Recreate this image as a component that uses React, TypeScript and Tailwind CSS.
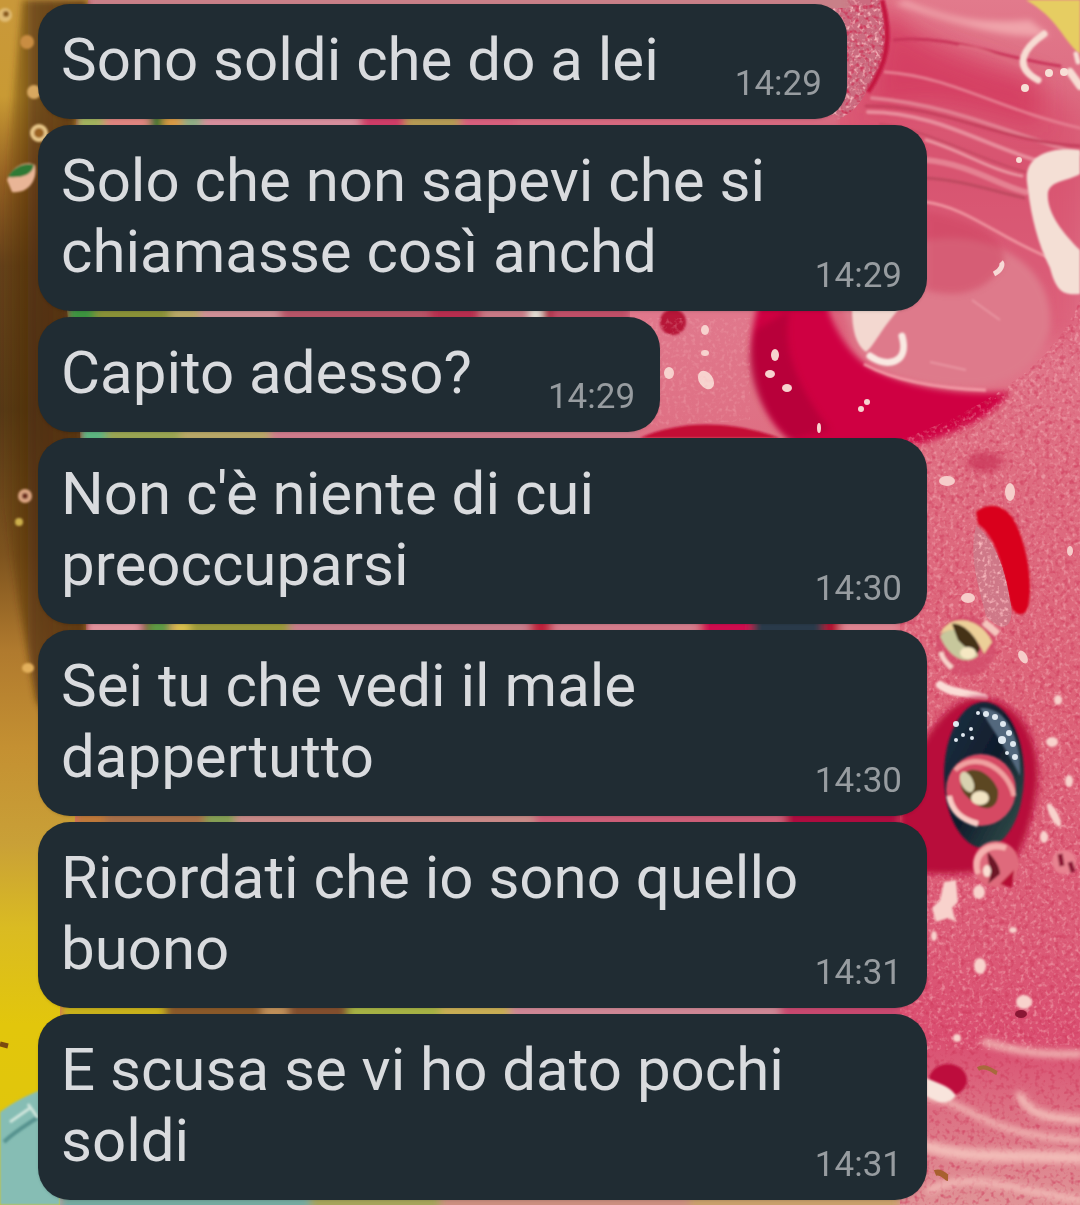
const messages = [
  { id: 1, text: "Sono soldi che do a lei", time: "14:29" },
  { id: 2, text: "Solo che non sapevi che si chiamasse così anchd", time: "14:29" },
  { id: 3, text: "Capito adesso?", time: "14:29" },
  { id: 4, text: "Non c'è niente di cui preoccuparsi", time: "14:30" },
  { id: 5, text: "Sei tu che vedi il male dappertutto", time: "14:30" },
  { id: 6, text: "Ricordati che io sono quello buono", time: "14:31" },
  { id: 7, text: "E scusa se vi ho dato pochi soldi", time: "14:31" },
];

// colour bands of the candy behind the messages: [y, [[x, width, fill], ...]]
const bands: [number, [number, number, string][]][] = [
  [-6, [[88, 762, "#c98088"]]],
  [
    115,
    [
      [76, 28, "#a2b35e"],
      [104, 46, "#df8580"],
      [150, 13, "#17752d"],
      [163, 19, "#d99a45"],
      [182, 20, "#8fae86"],
      [202, 158, "#d78f9d"],
      [360, 45, "#cf3d68"],
      [405, 55, "#b59b55"],
      [460, 55, "#d8607e"],
      [515, 325, "#d76a80"],
    ],
  ],
  [
    307,
    [
      [67, 28, "#3d9440"],
      [95, 75, "#8a9238"],
      [170, 30, "#b9a868"],
      [200, 80, "#cf9097"],
      [280, 150, "#b75467"],
      [430, 50, "#b82e50"],
      [480, 50, "#c87a86"],
      [530, 12, "#e6e9df"],
      [542, 10, "#a81838"],
      [552, 78, "#c05068"],
    ],
  ],
  [
    428,
    [
      [80, 26, "#5db581"],
      [106, 74, "#9aa552"],
      [180, 90, "#b9a868"],
      [270, 370, "#cf7c8c"],
    ],
  ],
  [
    620,
    [
      [86, 56, "#e2939c"],
      [142, 6, "#7a3a20"],
      [148, 22, "#5f9b45"],
      [172, 18, "#d9c04e"],
      [190, 100, "#9b9a3a"],
      [290, 240, "#c97e8c"],
      [530, 22, "#c0203c"],
      [552, 148, "#d57d8c"],
      [700, 52, "#d00a50"],
      [752, 72, "#2c3b4c"],
      [824, 16, "#b51030"],
      [840, 60, "#df8592"],
    ],
  ],
  [
    812,
    [
      [75, 30, "#c07a3a"],
      [105, 100, "#a8704a"],
      [205, 30, "#85a055"],
      [235, 300, "#c98a88"],
      [535, 250, "#cd5f78"],
      [785, 115, "#b01040"],
    ],
  ],
  [
    1004,
    [
      [60, 105, "#c9b21a"],
      [165, 97, "#8b5a2c"],
      [262, 26, "#c0905a"],
      [288, 60, "#83502e"],
      [348, 92, "#a6b344"],
      [440, 70, "#c9ae55"],
      [510, 270, "#cf8896"],
      [780, 120, "#c94870"],
    ],
  ],
  [
    1196,
    [
      [60, 250, "#76aaa0"],
      [310, 130, "#a6a45c"],
      [440, 250, "#cc8f80"],
      [690, 210, "#c9a06c"],
    ],
  ],
];

const Wallpaper = () => (
  <svg
    className="absolute inset-0 h-full w-full"
    viewBox="0 0 1080 1205"
    preserveAspectRatio="xMidYMin slice"
    aria-hidden="true"
  >
    <defs>
      <linearGradient id="gold" x1="0" y1="0" x2="0" y2="1">
        <stop offset="0" stopColor="#c9983a" />
        <stop offset="0.08" stopColor="#c99a34" />
        <stop offset="0.15" stopColor="#946022" />
        <stop offset="0.22" stopColor="#65421a" />
        <stop offset="0.34" stopColor="#573a16" />
        <stop offset="0.46" stopColor="#7d531e" />
        <stop offset="0.54" stopColor="#b07a2e" />
        <stop offset="0.62" stopColor="#c49032" />
        <stop offset="0.7" stopColor="#c9a037" />
        <stop offset="0.77" stopColor="#dabb22" />
        <stop offset="0.85" stopColor="#e2c60c" />
        <stop offset="1" stopColor="#dfc60c" />
      </linearGradient>
      <linearGradient id="brown" x1="0" y1="0" x2="1" y2="0">
        <stop offset="0" stopColor="#4d2c0c" stopOpacity="0" />
        <stop offset="0.4" stopColor="#4d2c0c" stopOpacity="0.7" />
        <stop offset="1" stopColor="#5a340e" stopOpacity="0.9" />
      </linearGradient>
      <linearGradient id="pink" x1="0" y1="0" x2="0" y2="1">
        <stop offset="0" stopColor="#e27a8c" />
        <stop offset="0.14" stopColor="#d9627a" />
        <stop offset="0.26" stopColor="#e0788c" />
        <stop offset="0.4" stopColor="#de6c80" />
        <stop offset="0.6" stopColor="#dd6278" />
        <stop offset="0.78" stopColor="#dc5c78" />
        <stop offset="0.86" stopColor="#da4d70" />
        <stop offset="0.92" stopColor="#dc7083" />
        <stop offset="1" stopColor="#e09497" />
      </linearGradient>
      <linearGradient id="seed" x1="0" y1="0" x2="1" y2="1">
        <stop offset="0" stopColor="#1f3445" />
        <stop offset="0.5" stopColor="#0f1b2b" />
        <stop offset="1" stopColor="#37564f" />
      </linearGradient>
      <filter id="blur2" x="-30%" y="-30%" width="160%" height="160%">
        <feGaussianBlur stdDeviation="1" />
      </filter>
      <filter id="blur6" x="-30%" y="-30%" width="160%" height="160%">
        <feGaussianBlur stdDeviation="3" />
      </filter>
      <filter id="blur14" x="-40%" y="-40%" width="180%" height="180%">
        <feGaussianBlur stdDeviation="12" />
      </filter>
      <filter id="blend" x="0" y="0" width="100%" height="100%">
        <feGaussianBlur stdDeviation="4 0" />
      </filter>
      <filter id="sugar" x="0" y="0" width="100%" height="100%" colorInterpolationFilters="sRGB">
        <feTurbulence type="fractalNoise" baseFrequency="0.24" numOctaves="2" seed="4" />
        <feColorMatrix values="0 0 0 0 0.97  0 0 0 0 0.72  0 0 0 0 0.74  3.2 0 0 0 -1.6" />
        <feComposite in2="SourceGraphic" operator="in" />
      </filter>
      <filter id="grit" x="0" y="0" width="100%" height="100%" colorInterpolationFilters="sRGB">
        <feTurbulence type="fractalNoise" baseFrequency="0.2" numOctaves="2" seed="11" />
        <feColorMatrix values="0 0 0 0 0.8  0 0 0 0 0.2  0 0 0 0 0.34  0 3.2 0 0 -1.6" />
        <feComposite in2="SourceGraphic" operator="in" />
      </filter>
    </defs>

    <rect width="1080" height="1205" fill="url(#pink)" />

    {/* pulled sugar, top right */}
    <path d="M870 0C900 30 1000 60 1080 110V340H830V0z" fill="#d84767" opacity="0.5" filter="url(#blur14)" />
    <path d="M885 0C900 40 960 60 1040 80V125C1000 120 930 85 870 115z" fill="#d12a54" opacity="0.55" filter="url(#blur14)" />
    <path d="M905 0C940 14 970 25 1030 20L1050 36C1000 40 940 18 895 4z" fill="#f0a4ab" filter="url(#blur6)" />
    <g fill="none" strokeLinecap="round" filter="url(#blur2)">
      <path d="M885 72C950 76 1000 110 1080 128" stroke="#e57a8e" strokeWidth="3" />
      <path d="M872 98C950 105 1000 130 1080 154" stroke="#e27e90" strokeWidth="4" />
      <path d="M868 112C940 112 990 150 1050 164" stroke="#e88c9b" strokeWidth="4" />
      <path d="M866 106C940 104 1000 142 1080 146" stroke="#c5405d" strokeWidth="3" />
      <path d="M880 124C930 130 980 160 1026 172" stroke="#c54862" strokeWidth="2" />
      <path d="M926 140C960 150 990 170 1022 176" stroke="#ea94a0" strokeWidth="3" />
      <path d="M926 178C960 180 990 190 1024 198" stroke="#bf4a60" strokeWidth="3" />
      <path d="M926 160C970 164 1000 186 1026 192" stroke="#e58192" strokeWidth="6" />
      <path d="M894 40C950 34 1000 58 1060 66" stroke="#c9355a" strokeWidth="3" />
      <path d="M926 202C970 208 1000 240 1060 262" stroke="#ee919d" strokeWidth="3" />
      <path d="M1050 70C1020 74 1000 50 960 46" stroke="#de6a7f" strokeWidth="3" />
    </g>
    <path d="M820 0H880C890 40 885 70 866 92C856 112 840 122 820 124z" fill="#cb6c80" />
    <path d="M820 0H880C890 40 885 70 866 92C856 112 840 122 820 124z" fill="#fff" filter="url(#sugar)" />
    <path d="M820 0H880C890 40 885 70 866 92C856 112 840 122 820 124z" fill="#fff" filter="url(#grit)" />
    <path d="M882 0C893 40 886 64 868 92" stroke="#c3133f" strokeWidth="5" fill="none" filter="url(#blur2)" />
    <path d="M1026 0H1080V54C1064 42 1058 18 1026 0z" fill="#e6cd62" filter="url(#blur2)" />
    <g fill="none" stroke="#f7dcd3" strokeLinecap="round" filter="url(#blur2)">
      <path d="M1044 34C1024 48 1012 66 1038 80" strokeWidth="7" />
      <path d="M1070 72L1080 86" strokeWidth="8" />
      <path d="M1076 54L1078 62" strokeWidth="5" />
    </g>
    <g fill="#f7dfd6">
      <circle cx="1025" cy="88" r="4" />
      <circle cx="1049" cy="73" r="4" />
      <circle cx="1064" cy="72" r="4" />
      <circle cx="1019" cy="160" r="3" />
    </g>
    <path
      d="M1080 150C1046 146 1024 158 1027 182C1030 210 1036 240 1050 268C1056 290 1062 296 1080 294V250C1062 232 1046 212 1048 192C1052 180 1066 182 1080 174z"
      fill="#f4dfd5"
      filter="url(#blur2)"
    />

    {/* glossy bubble */}
    <path d="M760 300C740 350 760 430 800 444H920C960 430 990 420 1010 392C950 396 900 384 868 366C845 350 830 320 826 300z" fill="#cf0642" filter="url(#blur6)" />
    <path d="M756 330C740 370 760 410 790 440L830 430C800 390 780 350 790 310z" fill="#a90334" opacity="0.6" filter="url(#blur6)" />
    <path d="M840 300C900 200 1060 230 1050 330C1030 390 970 396 900 376C860 364 850 340 840 300z" fill="#de7a8b" filter="url(#blur6)" />
    <path d="M926 212C980 220 1006 240 1004 262C990 290 960 300 926 290z" fill="#cf4260" opacity="0.5" filter="url(#blur6)" />
    <path d="M852 308H900C880 330 875 345 866 352C856 345 852 330 852 308z" fill="#f3d8d0" filter="url(#blur2)" />
    <path d="M902 336C910 364 886 368 870 356" stroke="#f9e9e2" strokeWidth="7" fill="none" strokeLinecap="round" filter="url(#blur2)" />
    <path d="M864 364C890 378 930 388 986 390" stroke="#f29aa5" strokeWidth="3" fill="none" filter="url(#blur2)" />
    <path d="M994 274C1002 270 1003 264 1001 262" stroke="#f7d9d6" strokeWidth="5" fill="none" />
    <path d="M972 300L1000 320M930 362L966 370" stroke="#e895a1" strokeWidth="2" fill="none" filter="url(#blur2)" />
    <circle cx="673" cy="322" r="13" fill="#b71537" filter="url(#blur2)" />
    <path d="M640 438C680 420 730 420 780 438z" fill="#c40a35" filter="url(#blur2)" />
    <g fill="#f7d3cf">
      <ellipse cx="775" cy="355" rx="4" ry="6" />
      <ellipse cx="770" cy="374" rx="5" ry="4" />
      <ellipse cx="787" cy="388" rx="5" ry="4" />
      <ellipse cx="705" cy="330" rx="4" ry="5" />
      <ellipse cx="705" cy="353" rx="4" ry="3" />
      <ellipse cx="669" cy="373" rx="5" ry="6" />
      <ellipse cx="706" cy="380" rx="7" ry="10" transform="rotate(-35 706 380)" />
      <circle cx="867" cy="402" r="3" />
      <circle cx="861" cy="409" r="3" />
      <ellipse cx="819" cy="428" rx="2" ry="5" />
    </g>

    {/* sugared surface */}
    <path d="M1080 300C1060 350 1010 400 900 440V1050H1080z" fill="#fff" opacity="0.5" filter="url(#sugar)" />
    <path d="M1080 300C1060 350 1010 400 900 440V1205H1080z" fill="#fff" opacity="0.55" filter="url(#grit)" />
    <path d="M640 318H750V420C720 424 690 420 640 430z" fill="#fff" opacity="0.3" filter="url(#sugar)" />
    <ellipse cx="985" cy="462" rx="18" ry="10" fill="#c93357" opacity="0.7" filter="url(#blur6)" />
    <path d="M976 512C990 500 1008 506 1016 524C1028 548 1034 590 1027 610C1022 618 1014 614 1011 606C1004 580 1000 540 978 524z" fill="#d9021f" filter="url(#blur2)" />
    <path d="M976 526C990 536 1004 560 1010 600C1016 626 1004 636 986 616C980 590 968 560 976 526z" fill="#cf7888" />
    <path d="M976 526C990 536 1004 560 1010 600C1016 626 1004 636 986 616C980 590 968 560 976 526z" fill="#fff" filter="url(#sugar)" />
    <g fill="#f6cdca">
      <ellipse cx="947" cy="481" rx="8" ry="5" />
      <ellipse cx="1070" cy="551" rx="3" ry="5" />
      <ellipse cx="1010" cy="492" rx="5" ry="9" />
      <ellipse cx="968" cy="598" rx="7" ry="5" />
      <ellipse cx="1023" cy="657" rx="4" ry="7" transform="rotate(-30 1023 657)" />
    </g>
    <g filter="url(#blur2)">
      <ellipse cx="966" cy="646" rx="30" ry="30" fill="#d2486a" opacity="0.7" />
      <path d="M940 634C950 612 982 618 992 642L984 654C976 634 960 624 940 634z" fill="#eccf98" />
      <path d="M940 636C950 624 972 630 978 656C962 668 946 652 940 636z" fill="#c7c79c" />
      <path d="M952 624C960 622 974 632 980 648C978 660 966 648 958 640z" fill="#443019" />
      <ellipse cx="968" cy="653" rx="8" ry="6" fill="#f5e7c2" />
      <path d="M941 652C942 660 948 664 952 668" stroke="#f8d3cb" strokeWidth="5" fill="none" />
      <path d="M984 622L998 634" stroke="#f5c6be" strokeWidth="7" />
      <path d="M940 685C952 694 968 692 984 698" stroke="#fbdcd6" strokeWidth="8" fill="none" strokeLinecap="round" />
    </g>

    {/* dark seed and its shadow */}
    <path d="M900 780C926 740 940 706 972 698C1010 692 1040 730 1038 780C1034 820 1024 844 1012 866C970 876 930 876 900 870z" fill="#b8093a" filter="url(#blur6)" />
    <ellipse cx="984" cy="775" rx="40" ry="73" fill="url(#seed)" filter="url(#blur2)" />
    <path d="M980 708C1006 706 1022 738 1020 776C1012 760 1000 740 988 722z" fill="#53687d" filter="url(#blur2)" />
    <g fill="#dfe8f0">
      <circle cx="986" cy="714" r="3" />
      <circle cx="995" cy="717" r="3" />
      <circle cx="1003" cy="724" r="3" />
      <circle cx="1009" cy="733" r="3" />
      <circle cx="1013" cy="744" r="3" />
      <circle cx="1002" cy="740" r="4" />
      <circle cx="1015" cy="757" r="3" />
      <circle cx="1007" cy="753" r="2" />
      <circle cx="978" cy="713" r="2" />
      <circle cx="956" cy="724" r="3" />
      <circle cx="971" cy="729" r="2" />
      <circle cx="963" cy="735" r="2" />
      <circle cx="956" cy="740" r="2" />
      <circle cx="972" cy="738" r="2" />
    </g>
    <g filter="url(#blur2)">
      <ellipse cx="981" cy="790" rx="35" ry="36" fill="#d64863" />
      <path d="M955 770C976 750 1008 768 1014 796" stroke="#f0a0a0" strokeWidth="5" fill="none" />
      <path d="M949 796C952 812 962 820 978 824" stroke="#f9cbc4" strokeWidth="6" fill="none" />
      <path d="M962 776C972 762 992 774 998 790C1000 808 986 814 974 802C964 796 958 788 962 776z" fill="#5c4724" />
      <ellipse cx="967" cy="782" rx="6" ry="11" transform="rotate(-25 967 782)" fill="#d8d2b0" />
      <ellipse cx="980" cy="798" rx="9" ry="7" fill="#f1e3c3" />
      <circle cx="996" cy="864" r="23" fill="#df6b7b" />
      <path d="M978 874C972 856 986 842 1006 848" stroke="#f5b0ae" strokeWidth="6" fill="none" />
      <path d="M988 852C996 860 1000 868 1000 874L988 884C994 870 986 862 988 852z" fill="#6d1225" />
      <path d="M1000 884L1014 870L1012 888z" fill="#b50a35" />
      <ellipse cx="987" cy="871" rx="4" ry="6" fill="#fbded3" />
      <circle cx="1064" cy="862" r="12" fill="#e88290" />
      <path d="M1060 854L1062 866M1070 862L1073 872" stroke="#8a1734" strokeWidth="5" />
    </g>
    <g fill="#f8d2cc" filter="url(#blur2)">
      <path d="M944 882L956 880L958 902L952 908L956 922L948 918L936 922L932 908L940 900z" />
      <ellipse cx="979" cy="892" rx="6" ry="7" />
      <ellipse cx="1054" cy="815" rx="4" ry="13" transform="rotate(-28 1054 815)" />
      <ellipse cx="1052" cy="742" rx="6" ry="5" />
      <ellipse cx="1058" cy="700" rx="4" ry="5" />
      <ellipse cx="1069" cy="781" rx="4" ry="6" />
      <ellipse cx="1044" cy="837" rx="4" ry="6" />
      <ellipse cx="980" cy="966" rx="6" ry="8" />
      <ellipse cx="934" cy="936" rx="3" ry="5" />
      <ellipse cx="1013" cy="930" rx="4" ry="3" />
      <ellipse cx="1024" cy="1002" rx="8" ry="7" />
      <circle cx="957" cy="1038" r="4" />
    </g>
    <ellipse cx="1021" cy="1014" rx="6" ry="4" fill="#8a1734" />

    {/* cream ripples, bottom right */}
    <g fill="none" stroke="#f2bcb8" strokeLinecap="round" filter="url(#blur6)">
      <path d="M985 1042C1010 1050 1040 1056 1080 1054" strokeWidth="7" />
      <path d="M1020 1096C1030 1116 1050 1118 1080 1120" strokeWidth="9" />
      <path d="M926 1098C970 1100 980 1136 1080 1140" strokeWidth="6" />
      <path d="M926 1146C970 1160 1010 1154 1080 1158" strokeWidth="12" />
      <path d="M930 1190C970 1170 1010 1190 1080 1200" strokeWidth="7" />
    </g>
    <ellipse cx="948" cy="1080" rx="19" ry="16" fill="#bd0f3d" filter="url(#blur2)" />
    <path d="M926 1078C940 1084 950 1086 956 1096C946 1108 934 1100 926 1096z" fill="#f8e4dc" filter="url(#blur2)" />
    <path d="M978 1069C986 1064 994 1072 997 1073" stroke="#a8693c" strokeWidth="4" fill="none" />
    <path d="M935 1173C942 1170 946 1178 948 1178" stroke="#a8602f" strokeWidth="6" fill="none" />

    {bands.map(([y, parts]) => (
      <g key={y} filter="url(#blend)">
        {parts.map(([x, width, fill]) => (
          <rect key={x} x={x} y={y} width={width} height="14" fill={fill} />
        ))}
      </g>
    ))}

    {/* golden edge, left */}
    <path d="M0 0H88L76 120L67 310L80 430L86 630L75 820L60 1010V1205H0z" fill="url(#gold)" />
    <path d="M22 0H88L76 120L67 310L80 430L86 630L75 760L36 700L18 600L0 480V240z" fill="url(#brown)" filter="url(#blur6)" />
    <path d="M0 1112C14 1102 24 1096 60 1082V1205H0z" fill="#86bdb4" filter="url(#blur2)" />
    <path d="M4 1142C14 1132 28 1124 40 1116" stroke="#56938f" strokeWidth="4" fill="none" filter="url(#blur2)" />
    <path d="M28 1104L38 1118M10 1122L30 1108" stroke="#cfe5dc" strokeWidth="3" fill="none" filter="url(#blur2)" />
    <path d="M0 1044L8 1046" stroke="#7a4a10" strokeWidth="5" />
    <g filter="url(#blur2)">
      <circle cx="5" cy="15" r="7" fill="#e0bb72" />
      <circle cx="6" cy="14" r="3" fill="#8a5c1e" />
      <circle cx="27" cy="42" r="7" fill="#c98d42" />
      <circle cx="34" cy="92" r="7" fill="#d8a860" />
      <circle cx="39" cy="133" r="7" fill="#9b6420" stroke="#e8c789" strokeWidth="4" />
      <path d="M7 180C12 166 26 160 35 165C38 180 28 194 12 192z" fill="#e9b596" />
      <path d="M8 177C14 166 26 162 34 165C32 176 20 178 8 177z" fill="#2f7a35" />
      <circle cx="25" cy="496" r="5" fill="#6b2f1c" stroke="#dba482" strokeWidth="4" />
      <circle cx="19" cy="522" r="4" fill="#cdb04c" />
      <ellipse cx="28" cy="668" rx="6" ry="5" fill="#e3b05c" />
    </g>
  </svg>
);

const Message = (props: { text: string; time: string }) => {
  return (
    <li className="flow-root max-w-[889px] rounded-[32px] bg-[#202c33] pb-[15px] pl-[23px] pr-[25px] pt-5 shadow-sm">
      <span className="text-[60px] leading-[71px] text-[#d9dbde]">{props.text}</span>
      <time className="float-right ml-[76px] mt-10 text-[35px] leading-10 text-[#979ca0]">
        {props.time}
      </time>
    </li>
  );
};

export default function App() {
  return (
    <main className="relative min-h-screen overflow-hidden bg-[#dd6278] font-[Roboto,sans-serif]">
      <Wallpaper />
      <ul className="relative flex flex-col items-start gap-1.5 pb-1 pl-[38px] pr-4 pt-1">
        {messages.map(({ id, text, time }) => (
          <Message key={id} text={text} time={time} />
        ))}
      </ul>
    </main>
  );
}
